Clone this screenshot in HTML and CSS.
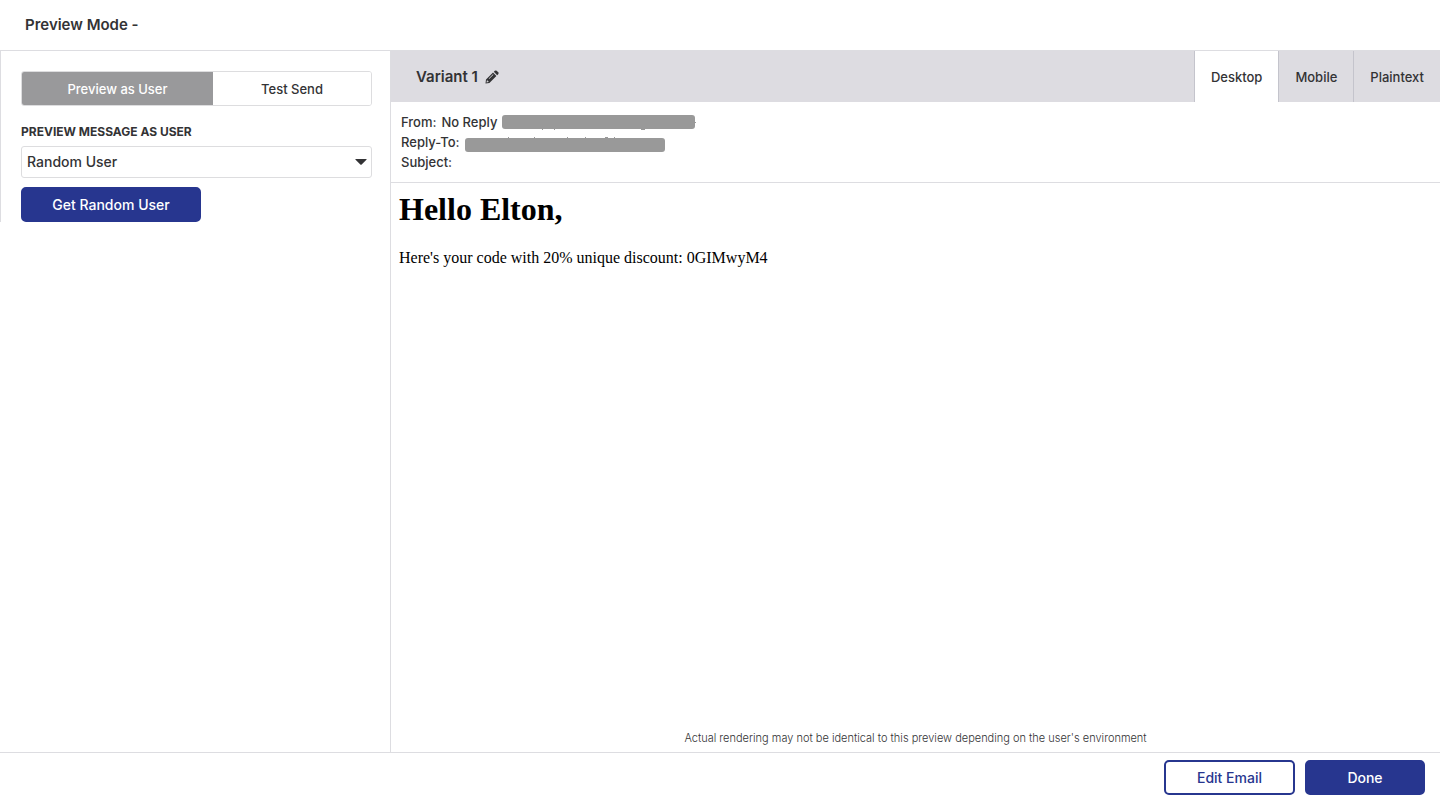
FILE: index.html
```html
<!DOCTYPE html>
<html lang="en">
<head>
<meta charset="utf-8">
<title>Preview Mode</title>
<link rel="stylesheet" href="styles.css">
</head>
<body>
<header class="topbar"><h1 class="title">Preview Mode -</h1></header>
<div class="workspace">
  <aside class="sidebar">
    <div class="controls">
      <div class="switch">
        <button class="switch-item active" type="button">Preview as User</button>
        <button class="switch-item" type="button">Test Send</button>
      </div>
      <label class="label" for="user">PREVIEW MESSAGE AS USER</label>
      <div class="select-wrap">
        <select class="select" id="user"><option>Random User</option></select>
        <svg class="caret" width="12" height="6" viewBox="0 0 12 6" aria-hidden="true"><path d="M.8 0h10.4q.9 0 .2.8L6.7 5.5q-.7.6-1.4 0L.6.8Q0 0 .8 0z"/></svg>
      </div>
      <button class="btn primary random" type="button">Get Random User</button>
    </div>
  </aside>
  <main class="main">
    <div class="variant-bar">
      <h2 class="variant">Variant 1</h2>
      <button class="edit" type="button" aria-label="Rename variant">
        <svg width="14" height="14" viewBox="0 0 14 14" aria-hidden="true"><path fill-rule="evenodd" d="M8 2.600l3.400 3.400-7 7L.5 13.500 1 9.600zM1.900 10.400l-.4 2.100 2.100-.4.200-.7-1-.2-.2-1zM8 4.300L3.700 8.600l.4.400 4.300-4.300z"/><path d="M8.800 1.800l1-1q1-.8 1.900 0l1.500 1.500q.8.900 0 1.900l-1 1z"/></svg>
      </button>
      <nav class="tabs">
        <button class="tab current" type="button">Desktop</button>
        <button class="tab" type="button">Mobile</button>
        <button class="tab" type="button">Plaintext</button>
      </nav>
    </div>
    <dl class="meta">
      <div class="meta-row"><dt>From:</dt><dd>No Reply</dd><dd class="mask"><svg width="194" height="18" viewBox="0 0 194 18" aria-hidden="true"><rect y="2" width="193" height="14" rx="3"/><path d="M40 16h1v1h-1zM52 16h1v1h-1zM139 16h4v1h-4zM193 9h1v1h-1z"/></svg></dd></div>
      <div class="meta-row"><dt>Reply-To:</dt><dd class="mask"><svg width="200" height="20" viewBox="0 0 200 20" aria-hidden="true"><rect y="6" width="200" height="14" rx="3"/><path d="M43 5h1v1h-1zM69 5h1v1h-1zM102 5h1v1h-1zM120 5h1v1h-1zM140 5h3v1h-3zM149 5h1v1h-1z"/></svg></dd></div>
      <div class="meta-row"><dt>Subject:</dt></div>
    </dl>
    <article class="message">
      <h1 class="greeting">Hello Elton,</h1>
      <p class="body">Here's your code with 20% unique discount: 0GIMwyM4</p>
    </article>
    <p class="notice">Actual rendering may not be identical to this preview depending on the user's environment</p>
  </main>
</div>
<footer class="footer">
  <button class="btn outline" type="button">Edit Email</button>
  <button class="btn primary done" type="button">Done</button>
</footer>
</body>
</html>
```

FILE: styles.css
```css
* { box-sizing: border-box; }
body {
  margin: 0;
  min-height: 100vh;
  display: flex;
  flex-direction: column;
  background: #fff;
  color: #333335;
  font: 500 13px/20px Inter, sans-serif;
}
h1, h2, p, dl, dd { margin: 0; }
button, select { font: inherit; color: inherit; cursor: pointer; }
.topbar { padding: 15px 25px; border-bottom: 1px solid #dddde1; }
.title { font-size: 15px; line-height: 20px; font-weight: 600; }
.workspace { flex: 1; display: flex; }
.sidebar { width: 390px; flex: none; }
.controls {
  display: flex;
  flex-direction: column;
  padding: 20px 18px 0 20px;
  border-left: 1px solid #dddde1;
}
.switch {
  display: grid;
  grid-template-columns: 191px 1fr;
  height: 35px;
  border: 1px solid #dddddf;
  border-radius: 3px;
  overflow: hidden;
}
.switch-item { border: 0; padding: 0; background: #fff; }
.switch-item.active { background: #99999b; color: #fff; }
.label { margin: 16px 0 4px; font-size: 12px; font-weight: 700; }
.select-wrap { position: relative; }
.select {
  display: block;
  appearance: none;
  width: 100%;
  height: 32px;
  padding: 0 24px 0 5px;
  border: 1px solid #dddddf;
  border-radius: 3px;
  background: #fff;
  font-size: 14px;
}
.caret { position: absolute; right: 5px; top: 13px; fill: #333335; pointer-events: none; }
.btn {
  height: 35px;
  padding: 0 28px;
  border: 2px solid #27368f;
  border-radius: 5px;
  font-size: 14px;
}
.primary { background: #27368f; color: #fff; }
.outline { background: #fff; color: #27368f; width: 131px; }
.random { width: 180px; margin-top: 9px; }
.done { width: 120px; }
.main {
  flex: 1;
  min-width: 0;
  display: flex;
  flex-direction: column;
  border-left: 1px solid #dddde1;
}
.variant-bar { display: flex; align-items: center; height: 51px; padding-left: 25px; background: #dddce1; }
.variant { font-size: 15px; line-height: 20px; font-weight: 600; }
.edit { display: flex; margin-left: 7px; padding: 0; border: 0; background: none; fill: #333335; }
.tabs { display: flex; align-self: stretch; margin-left: auto; }
.tab { padding: 0 16px; border: 0; border-left: 1px solid #c4c4cc; background: none; }
.tab.current { background: #fff; }
.meta { padding: 10px; border-bottom: 1px solid #dddde1; }
.meta-row { display: flex; gap: 5px; height: 20px; }
.mask { display: flex; align-items: center; }
.mask svg { fill: #999; }
.message { flex: 1; padding: 8px; color: #000; font: 16px/18px "Liberation Serif", serif; }
.greeting { font-size: 32px; line-height: 36px; margin-bottom: 22px; }
.notice { padding: 6px 0 4px; text-align: center; font-size: 11px; font-weight: 300; }
.footer {
  display: flex;
  justify-content: flex-end;
  gap: 10px;
  padding: 7px 15px 8px;
  border-top: 1px solid #dddde1;
}
```
